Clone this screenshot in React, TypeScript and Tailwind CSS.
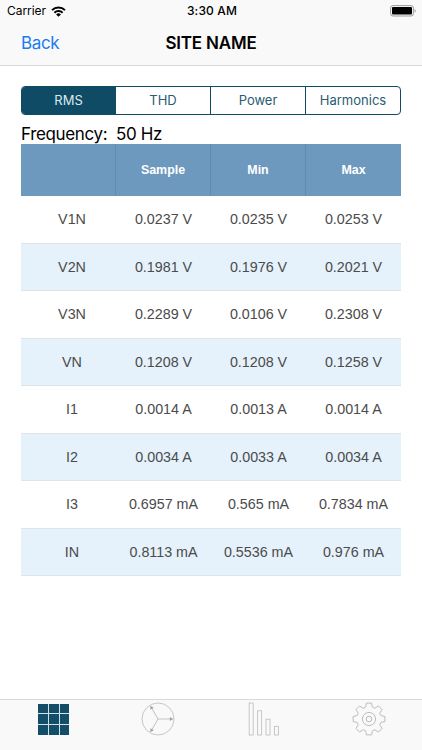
const tabs = ["RMS", "THD", "Power", "Harmonics"];

const columns = ["", "Sample", "Min", "Max"];

const rows = [
  ["V1N", "0.0237 V", "0.0235 V", "0.0253 V"],
  ["V2N", "0.1981 V", "0.1976 V", "0.2021 V"],
  ["V3N", "0.2289 V", "0.0106 V", "0.2308 V"],
  ["VN", "0.1208 V", "0.1208 V", "0.1258 V"],
  ["I1", "0.0014 A", "0.0013 A", "0.0014 A"],
  ["I2", "0.0034 A", "0.0033 A", "0.0034 A"],
  ["I3", "0.6957 mA", "0.565 mA", "0.7834 mA"],
  ["IN", "0.8113 mA", "0.5536 mA", "0.976 mA"],
];

function WifiIcon() {
  return (
    <svg width="15" height="11" viewBox="0 0 15 11" fill="none" stroke="#000">
      <path d="M1 4.1a9.4 9.4 0 0 1 13 0" strokeWidth="2" />
      <path d="M3.4 6.7a5.9 5.9 0 0 1 8.2 0" strokeWidth="1.9" />
      <path d="M7.5 10.8 5.1 8.4a3.5 3.5 0 0 1 4.8 0z" fill="#000" stroke="none" />
    </svg>
  );
}

function BatteryIcon() {
  return (
    <svg width="27" height="12" viewBox="0 0 27 12">
      <rect x="0.6" y="0.6" width="22.8" height="10.4" rx="2.4" fill="none" stroke="#9b9b9b" />
      <rect x="2" y="2" width="20" height="7.6" rx="1" fill="#000" />
      <path d="M24.6 4v3.8c1.5-.5 1.5-3.3 0-3.8z" fill="#9b9b9b" />
    </svg>
  );
}

function GridIcon() {
  return (
    <div className="grid h-[31px] w-[31px] grid-cols-3 gap-px bg-[#d3e0e6]">
      {Array.from({ length: 9 }, (_, i) => (
        <div key={i} className="bg-[#134d67]" />
      ))}
    </div>
  );
}

function PhasorIcon() {
  return (
    <svg width="34" height="34" viewBox="-17 -17 34 34" fill="none" stroke="#b9b9b9" strokeWidth="0.8">
      <circle r="16" />
      {[0, 120, 240].map((angle) => (
        <g key={angle} transform={`rotate(${angle})`}>
          <path d="M0 0H13" />
          <path d="M11.8-2 15.4 0 11.8 2z" fill="#a3a3a3" stroke="none" />
        </g>
      ))}
    </svg>
  );
}

function BarsIcon() {
  return (
    <svg width="32" height="34" viewBox="0 0 32 34" fill="none" stroke="#c0c2c5" strokeWidth="0.9">
      <rect x="1.2" y="1" width="4" height="32" />
      <rect x="9.6" y="8.8" width="4" height="24.2" />
      <rect x="18" y="17.2" width="4" height="15.8" />
      <rect x="26.4" y="24.4" width="4" height="8.6" />
    </svg>
  );
}

// One tooth repeated eight times around the centre
const point = (x: number, y: number, angle: number) => {
  const a = (angle * Math.PI) / 180;
  return `${(x * Math.cos(a) - y * Math.sin(a)).toFixed(2)} ${(x * Math.sin(a) + y * Math.cos(a)).toFixed(2)}`;
};

const gearPath =
  [0, 45, 90, 135, 180, 225, 270, 315]
    .map(
      (a, i) =>
        `${i === 0 ? "M" : "L"}${point(-3.7, -11.6, a)} Q${point(-3.1, -12.2, a)} ${point(-2.6, -15.9, a)} L${point(2.6, -15.9, a)} Q${point(3.1, -12.2, a)} ${point(3.7, -11.6, a)}`,
    )
    .join(" ") + "Z";

function GearIcon() {
  return (
    <svg width="34" height="34" viewBox="-17 -17 34 34" fill="none" stroke="#b4b6b9" strokeWidth="0.9" strokeLinejoin="round">
      <path d={gearPath} />
      <circle r="6.6" />
      <circle r="2.8" />
    </svg>
  );
}

export default function App() {
  return (
    <div className="flex h-[750px] w-[422px] flex-col overflow-hidden bg-white font-[Inter,'Liberation_Sans',sans-serif] text-black">
      <header className="h-[66px] border-b border-[#d9d9d9] bg-[#f9f9f9]">
        <div className="grid h-[22px] grid-cols-3 items-center pr-[5px] pl-[7px] text-[12px]">
          <div className="flex items-center gap-[5px]">
            <span className="tracking-[-0.05px]">Carrier</span>
            <WifiIcon />
          </div>
          <span className="text-center font-medium tracking-[0.15px]">3:30 AM</span>
          <div className="flex justify-end">
            <BatteryIcon />
          </div>
        </div>
        <div className="grid h-[43px] grid-cols-3 items-center px-[21px] pt-px">
          <span className="text-[17px] tracking-[-0.35px] text-[#1a7cf5]">Back</span>
          <span className="text-center text-[17px] font-semibold tracking-[-0.2px] whitespace-nowrap">SITE NAME</span>
        </div>
      </header>

      <main className="flex-1 px-[21px] pt-[20px]">
        <div className="grid h-[29px] grid-cols-[93px_95px_95px_1fr] overflow-hidden rounded-[4px] border border-[#104b65] text-[13px] text-[#2b5c72]">
          {tabs.map((tab, i) => (
            <div
              key={tab}
              className={
                i === 0
                  ? "flex items-center justify-center bg-[#104b65] pt-px text-[#dce8ee]"
                  : "flex items-center justify-center border-l border-[#104b65] pt-px"
              }
            >
              {tab}
            </div>
          ))}
        </div>

        <p className="h-[29px] pt-[7px] text-[17px] leading-[24px] tracking-[-0.36px] whitespace-pre">Frequency:  50 Hz</p>

        <div className="font-['Liberation_Sans',Arial,sans-serif]">
          <div className="grid h-[52px] grid-cols-[94px_95px_95px_1fr] bg-[#6e99be] text-[12.4px] font-bold text-white">
            {columns.map((column, i) => (
              <div
                key={i}
                className={i === 0 ? "" : "flex items-center justify-center border-l border-[#618cb1] pt-px"}
              >
                {column}
              </div>
            ))}
          </div>
          {rows.map((row) => (
            <div
              key={row[0]}
              className="grid h-[47.5px] grid-cols-4 border-b border-[#dfe4e8] text-[14.3px] text-[#4b4b4b] odd:bg-[#e5f2fc]"
            >
              {row.map((cell, i) => (
                <div
                  key={i}
                  className={
                    i === 0
                      ? "flex items-center justify-center pt-px pl-[7px]"
                      : "flex items-center justify-center pt-px"
                  }
                >
                  {cell}
                </div>
              ))}
            </div>
          ))}
        </div>
      </main>

      <nav className="grid h-[51px] grid-cols-4 border-t border-[#d9d9d9] bg-[#f9f9f9] pt-[2px]">
        <div className="flex h-[34px] items-center justify-center pl-[2px]">
          <GridIcon />
        </div>
        <div className="flex h-[34px] items-center justify-center">
          <PhasorIcon />
        </div>
        <div className="flex h-[34px] items-center justify-center">
          <BarsIcon />
        </div>
        <div className="flex h-[34px] items-center justify-center">
          <GearIcon />
        </div>
      </nav>
    </div>
  );
}
